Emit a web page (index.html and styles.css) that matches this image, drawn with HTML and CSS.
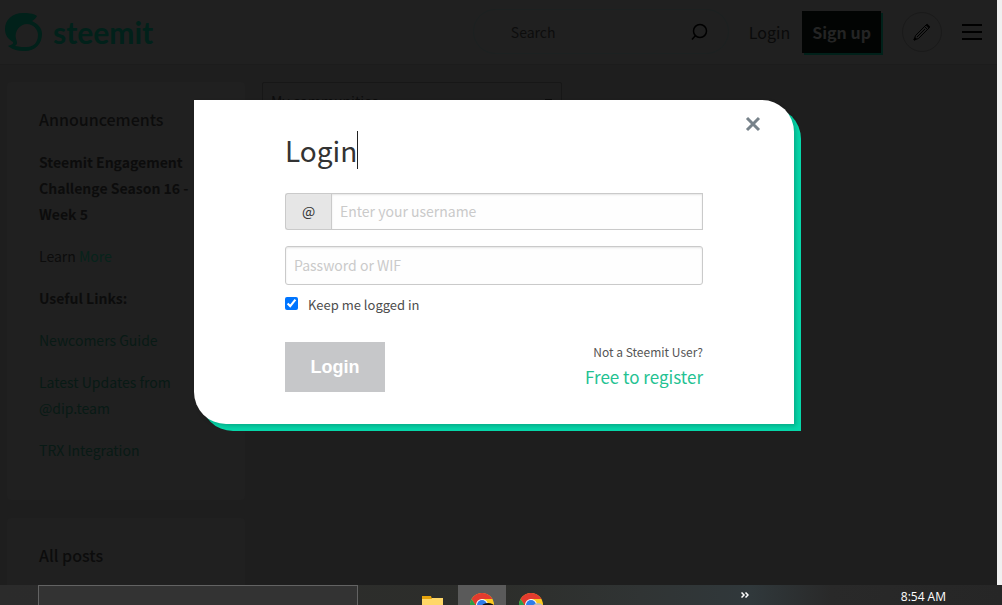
FILE: index.html
```html
<!DOCTYPE html>
<html lang="en">
<head>
    <meta charset="UTF-8">
    <meta name="viewport" content="width=device-width, initial-scale=1.0">
    <title>Steemit</title>
    <link rel="stylesheet" href="styles.css">
</head>
<body>
    <div class="page">
        <header class="header">
            <a class="logo" href="#">
                <svg width="38" height="40" viewBox="0 0 38 40" aria-hidden="true">
                    <path fill-rule="evenodd" d="M32 4C28 1 22 1 18 1C7 1 0 8 0 17C0 23 3 27 8 30C9 32 6 33 3 34C8 38 13 39 20 39C30 39 37 32 37 22C37 16 33 12 27 9C29 8 31 6 32 4ZM22 12C28 12 33 17 33 23C33 30 29 35 22 35C18 35 15 35 10 34C13 32 12 30 11 27C9 19 15 12 22 12Z"/>
                </svg>
                <span>steemit</span>
            </a>
            <form class="search">
                <input type="search" placeholder="Search" aria-label="Search">
                <button type="button" aria-label="Search">
                    <svg width="18" height="18" viewBox="0 0 18 18" aria-hidden="true">
                        <circle cx="10" cy="8" r="6.5"/>
                        <path d="M5.500 12.500L2 16.500"/>
                    </svg>
                </button>
            </form>
            <nav class="header-nav">
                <a class="login-link" href="#">Login</a>
                <a class="signup" href="#">Sign up</a>
                <button class="compose" type="button" aria-label="Write a post">
                    <svg width="20" height="20" viewBox="0 0 20 20" aria-hidden="true">
                        <path d="M2 18L3.500 13.500L14.500 2.500L17.500 5.500L6.500 16.500ZM12.500 4.500L15.500 7.500M5 15L13 7"/>
                        <path class="tip" d="M14.500 2.500L17.500 5.500M2 18L4 16"/>
                    </svg>
                </button>
                <button class="menu" type="button" aria-label="Menu">
                    <span></span><span></span><span></span>
                </button>
            </nav>
        </header>

        <main class="content">
            <aside class="sidebar">
                <section class="card">
                    <h2>Announcements</h2>
                    <p><strong>Steemit Engagement Challenge Season 16 - Week 5</strong></p>
                    <p>Learn <a class="more" href="#">More</a></p>
                    <p><strong>Useful Links:</strong></p>
                    <p><a href="#">Newcomers Guide</a></p>
                    <p><a href="#">Latest Updates from @dip.team</a></p>
                    <p><a href="#">TRX Integration</a></p>
                </section>
                <section class="card">
                    <h2>All posts</h2>
                </section>
            </aside>
            <div class="feed">
                <select class="communities" aria-label="Communities">
                    <option>My communities</option>
                </select>
            </div>
        </main>

        <div class="overlay">
            <div class="modal" role="dialog" aria-labelledby="login-title">
                <button class="close" type="button" aria-label="Close">
                    <svg width="16" height="16" viewBox="0 0 16 16" aria-hidden="true">
                        <path d="M2 2L14 14M14 2L2 14"/>
                    </svg>
                </button>
                <h3 id="login-title">Login</h3>
                <form>
                    <div class="input-group">
                        <label for="username">@</label>
                        <input type="text" id="username" placeholder="Enter your username">
                    </div>
                    <input class="password" type="password" placeholder="Password or WIF" aria-label="Password or WIF">
                    <div class="remember">
                        <input type="checkbox" id="save-login" checked>
                        <label for="save-login">Keep me logged in</label>
                    </div>
                    <div class="modal-actions">
                        <button class="submit" type="submit">Login</button>
                        <div class="register">
                            <span>Not a Steemit User?</span>
                            <a href="#">Free to register</a>
                        </div>
                    </div>
                </form>
            </div>
        </div>
        <div class="scrollbar"></div>
    </div>

    <footer class="taskbar">
        <div class="task-search"></div>
        <div class="task-apps">
            <div class="task">
                <svg width="22" height="18" viewBox="0 0 22 18" aria-hidden="true">
                    <path fill="#ffd768" d="M0 2H21V18H0Z"/>
                    <path fill="#e5a30c" d="M0 0H9L10 3H0Z"/>
                </svg>
            </div>
            <div class="task active">
                <svg width="24" height="24" viewBox="0 0 24 24" aria-hidden="true">
                    <circle cx="12" cy="12" r="12" fill="#fdc922"/>
                    <path fill="#e33b2e" d="M1.600 6A12 12 0 0 1 22.400 6H12L7 15Z"/>
                    <path fill="#2b9c48" d="M1.600 6L8 16L12 24A12 12 0 0 1 1.600 6Z"/>
                    <circle cx="12" cy="12" r="6" fill="#fff"/>
                    <circle cx="12" cy="12" r="5" fill="#2f7de9"/>
                    <ellipse cx="18" cy="13" rx="6" ry="3" fill="#111"/>
                </svg>
            </div>
            <div class="task">
                <svg width="24" height="24" viewBox="0 0 24 24" aria-hidden="true">
                    <circle cx="12" cy="12" r="12" fill="#fdc922"/>
                    <path fill="#e33b2e" d="M1.600 6A12 12 0 0 1 22.400 6H12L7 15Z"/>
                    <path fill="#2b9c48" d="M1.600 6L8 16L12 24A12 12 0 0 1 1.600 6Z"/>
                    <circle cx="12" cy="12" r="6" fill="#fff"/>
                    <circle cx="12" cy="12" r="5" fill="#2f7de9"/>
                    <circle cx="19" cy="16" r="6" fill="#b9b9b9"/>
                </svg>
            </div>
        </div>
        <div class="tray">
            <svg width="8" height="6" viewBox="0 0 8 6" aria-hidden="true">
                <path d="M0.500 0.500L3 3L0.500 5.500M4.500 0.500L7 3L4.500 5.500"/>
            </svg>
            <span>8:54 AM</span>
        </div>
    </footer>
</body>
</html>
```
FILE: styles.css
```css
* {
    box-sizing: border-box;
}

body {
    margin: 0;
    height: 100vh;
    display: flex;
    flex-direction: column;
    overflow: hidden;
    background: #1e1e1e;
    color: #0c0c0c;
    font-family: "Noto Sans CJK SC", "Noto Sans", sans-serif;
    font-size: 14px;
    line-height: 26px;
}

a {
    color: #081a15;
    text-decoration: none;
}

button,
input,
select {
    font-family: inherit;
}

button {
    border: none;
    padding: 0;
    background: none;
    cursor: pointer;
}

svg {
    display: block;
}

.page {
    position: relative;
    flex: 1;
    min-height: 0;
    overflow: hidden;
    padding-right: 5px;
}

/* Header */
.header {
    display: flex;
    align-items: center;
    height: 65px;
    padding: 0 15px 1px 5px;
    background: #202020;
    border-bottom: 1px solid #1c1c1c;
}

.logo {
    display: flex;
    align-items: center;
    gap: 10px;
    color: #01211a;
    font-family: Lato, sans-serif;
    font-size: 30px;
    font-weight: 700;
}

.logo svg {
    fill: #01211a;
}

.search {
    display: flex;
    align-items: center;
    width: 256px;
    height: 45px;
    margin-left: auto;
    padding: 0 20px 0 37px;
    border: 1px solid #1c2121;
    border-radius: 23px;
}

.search input {
    flex: 1;
    min-width: 0;
    padding: 0;
    border: none;
    outline: none;
    background: none;
    font-size: 14px;
}

.search input::placeholder {
    color: #0d0d0d;
}

.search svg,
.compose svg {
    fill: none;
    stroke: #000;
    stroke-width: 1.5;
}

.compose svg {
    stroke-width: 1;
}

.compose .tip {
    stroke-width: 2;
}

.header-nav {
    display: flex;
    align-items: center;
    margin-left: 20px;
}

.login-link {
    color: #0a0a0a;
    font-size: 16px;
}

.signup {
    margin-left: 12px;
    padding: 8px 10px;
    background: #020403;
    box-shadow: 2px 2px 0 #01211a;
    color: #242424;
    font-size: 16px;
    font-weight: 700;
}

.compose {
    display: grid;
    place-items: center;
    width: 40px;
    height: 40px;
    margin-left: 21px;
    border: 1px solid #1a1a1a;
    border-radius: 50%;
}

.menu {
    display: flex;
    flex-direction: column;
    gap: 5px;
    width: 20px;
    margin-left: 20px;
}

.menu span {
    height: 2px;
    background: #000;
}

/* Content */
.content {
    display: flex;
    gap: 17px;
    padding: 17px 7px;
}

.sidebar {
    flex: none;
    width: 238px;
}

.card {
    margin-bottom: 18px;
    padding: 24px 32px 37px;
    background: #202020;
    border-radius: 4px;
}

.card h2 {
    margin: 0 0 17px;
    font-size: 16px;
    font-weight: 500;
}

.card p {
    margin: 0 -10px 16px 0;
}

.card p:last-child {
    margin-bottom: 0;
}

.card strong {
    font-weight: 700;
}

.more {
    color: #07231b;
}

.feed {
    flex: 1;
}

.communities {
    appearance: none;
    width: 300px;
    height: 38px;
    padding: 0 8px;
    background: #1e1e1e linear-gradient(#0c0c0c, #0c0c0c) no-repeat right 9px center / 7px 4px;
    border: 1px solid #171717;
    border-radius: 2px;
    color: #0c0c0c;
    font-size: 14px;
}

/* Login dialog */
.overlay {
    position: absolute;
    inset: 0;
    padding: 100px 14px 0 0;
}

.modal {
    position: relative;
    max-width: 600px;
    margin: 0 auto;
    padding: 31px 91px 32px;
    background: #fff;
    border-radius: 0 32px;
    box-shadow: 2px 2px 4px rgba(0, 0, 0, 0.2), 7px 7px 0 #06d6a9;
    color: #333;
}

.close {
    position: absolute;
    top: 16px;
    right: 33px;
}

.close svg {
    fill: none;
    stroke: #77828a;
    stroke-width: 3;
}

.modal h3 {
    width: max-content;
    margin: 0 0 24px;
    border-right: 1px solid #222;
    font-size: 28px;
    font-weight: 400;
    line-height: 38px;
}

.input-group {
    display: flex;
    height: 37px;
    margin-bottom: 16px;
}

.input-group label {
    width: 46px;
    border: 1px solid #cacaca;
    border-right: none;
    border-radius: 3px 0 0 3px;
    background: #e6e6e6;
    font-size: 14px;
    line-height: 34px;
    text-align: center;
}

.input-group input,
.password {
    min-width: 0;
    padding: 0 8px 2px;
    border: 1px solid #cacaca;
    background: #fefefe;
    box-shadow: inset 0 1px 2px rgba(10, 10, 10, 0.1);
    font-size: 14px;
    outline: none;
}

.input-group input {
    flex: 1;
}

.password {
    display: block;
    width: 100%;
    height: 39px;
    border-radius: 3px;
}

.modal input::placeholder {
    color: #cacaca;
}

.remember {
    display: flex;
    gap: 10px;
    margin-top: 7px;
    color: #4d4d4d;
    font-size: 13px;
}

.remember input {
    width: 13px;
    height: 13px;
    margin: 5px 0 0;
    accent-color: #0075ff;
}

.modal-actions {
    display: flex;
    justify-content: space-between;
    margin-top: 24px;
}

.submit {
    width: 100px;
    height: 50px;
    background: #c6c7c9;
    color: #fff;
    font-family: "Liberation Sans", Arial, sans-serif;
    font-size: 18px;
    font-weight: 700;
}

.register {
    display: flex;
    flex-direction: column;
    color: #555;
    text-align: right;
    font-size: 12px;
    line-height: 20px;
}

.register a {
    color: #24c292;
    font-size: 17px;
    line-height: 30px;
}

.scrollbar {
    position: absolute;
    top: 0;
    right: 0;
    bottom: 0;
    width: 5px;
    background: #f0f0f0;
}

/* Taskbar */
.taskbar {
    display: flex;
    height: 20px;
    padding-left: 38px;
    overflow: hidden;
    background: linear-gradient(90deg, #2b2b2b, #2d2e2b 50%, #303434 64%, #30383b 75%, #292929 83%, #262626);
    color: #fff;
}

.task-search {
    width: 320px;
    border: 1px solid #636363;
    border-bottom: none;
    background: #333;
}

.task-apps {
    display: flex;
    gap: 1px;
    margin-left: 51px;
}

.task {
    display: flex;
    justify-content: center;
    width: 48px;
    padding-top: 8px;
}

.task:first-child {
    padding-top: 11px;
}

.task.active {
    background: #5a5a5a;
}

.tray {
    display: flex;
    align-items: flex-start;
    gap: 152px;
    margin-left: auto;
    padding-right: 56px;
    font-family: "Open Sans", "Noto Sans", sans-serif;
    font-size: 12px;
    line-height: 24px;
}

.tray svg {
    margin-top: 7px;
    fill: none;
    stroke: #fff;
    stroke-width: 1.5;
}
```
